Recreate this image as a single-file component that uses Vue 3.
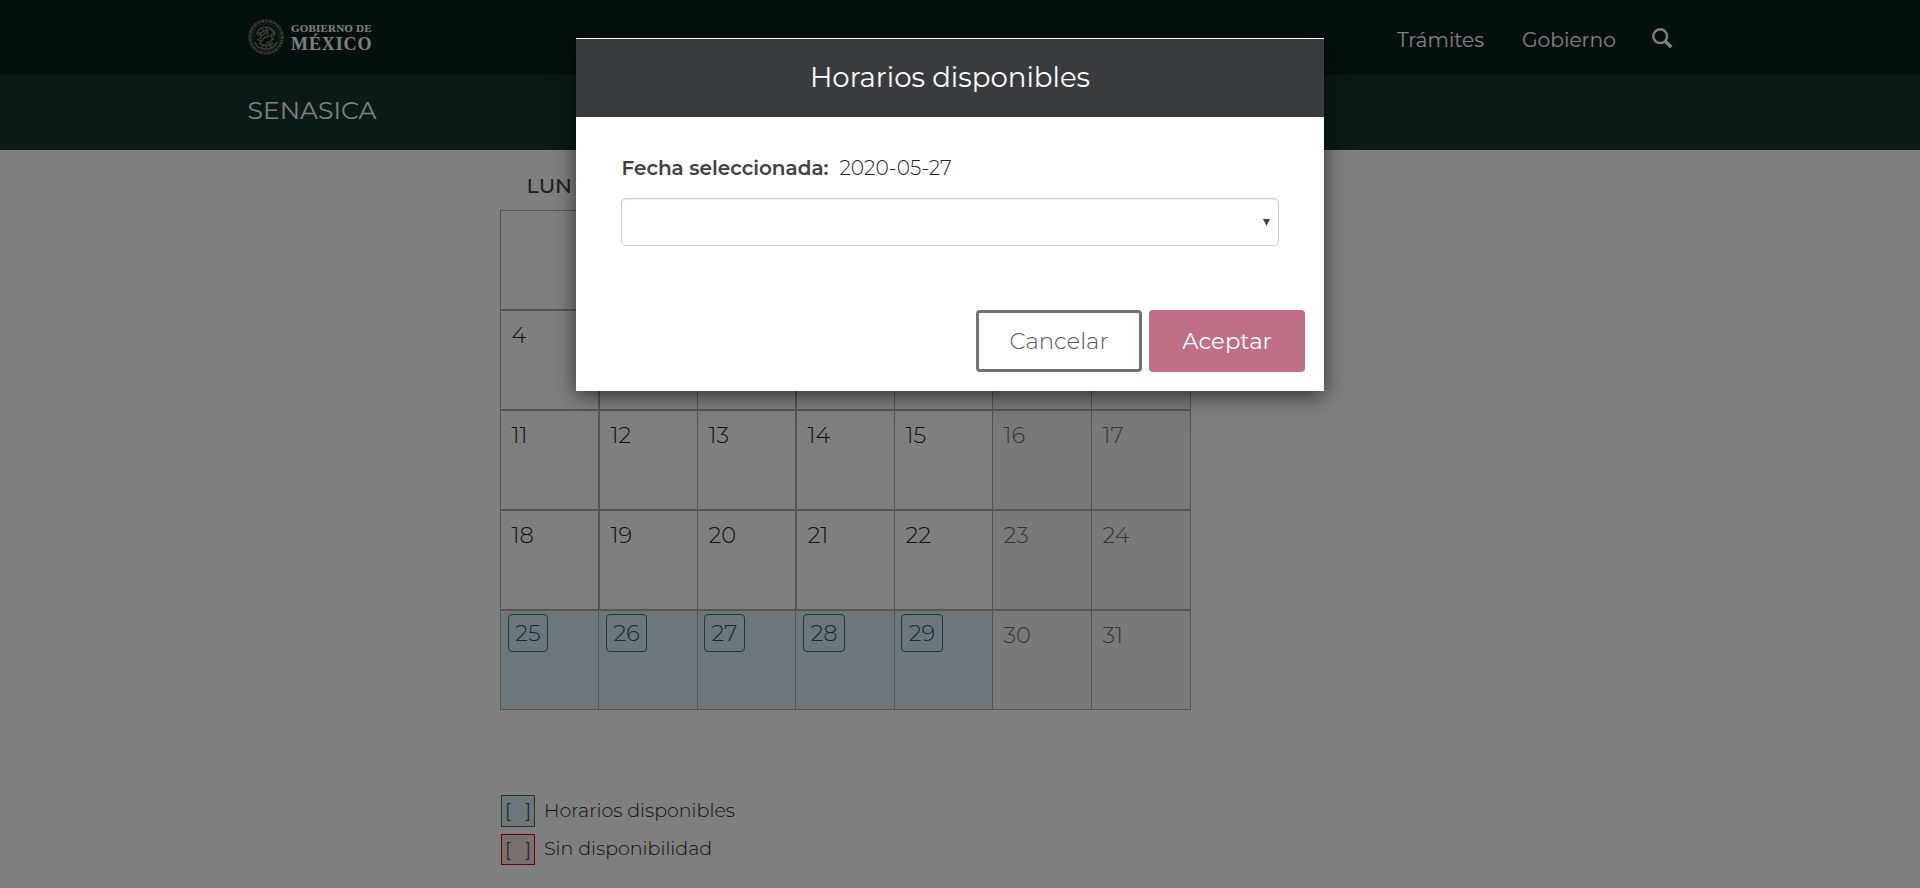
<script setup>
const days = [
  null, null, null, null, 1, 2, 3,
  ...Array.from({ length: 28 }, (_, i) => i + 4),
]
const cells = days.map((day, i) => {
  const col = i % 7
  const row = Math.floor(i / 7)
  return {
    day,
    weekend: col > 4,
    available: row === 4 && col < 5,
    thick: col === 1 || col === 3,
    top: row > 0,
    covered: row < 2 && day !== 4,
  }
})
const weekdays = ['LUN', 'MAR', 'MIÉ', 'JUE', 'VIE', 'SÁB', 'DOM']
</script>

<template>
  <div class="page">
    <header class="topbar">
      <div class="brand">
        <svg class="seal" viewBox="0 0 36 36" fill="none" stroke="#77725c">
          <circle cx="18" cy="18" r="16.2" stroke-width="3" stroke-dasharray="2.2 .7 1.2 .6 2.8 .8" />
          <circle cx="18" cy="18" r="13.4" stroke-width=".7" opacity=".7" />
          <g stroke-width="1.7">
            <path d="M9 16c0-5 4-8 9-8 4 0 8 3 9 7M11 17c2-5 6-6 9-5M12 20c2-5 5-6 9-6M14 22c2-4 5-5 8-5" />
            <path d="M21 10c3 1 5 3 5 6l-3-1M22 16c3 2 3 5 0 7l-4 1M10 13l4 4M14 10l3 4M18 9l2 4M24 18l2 3M9 20l5 3" />
            <path d="M7 23c2 5 6 7 11 7s9-3 11-7M11 24c4 3 10 3 14 0M15 25l-1 4M18 26v4M22 25l1 4" />
          </g>
        </svg>
        <div class="wordmark">
          <span class="w1">GOBIERNO DE</span>
          <span class="w2">MÉXICO</span>
        </div>
      </div>
      <nav class="nav">
        <a class="n1">Trámites</a>
        <a class="n2">Gobierno</a>
        <svg class="search" viewBox="0 0 21 21" fill="none" stroke="#fff">
          <circle cx="8.2" cy="8.2" r="6.9" stroke-width="2.4" />
          <path d="M13 13l6.3 6.3" stroke-width="3.6" />
        </svg>
      </nav>
    </header>
    <div class="subbar"><span>SENASICA</span></div>

    <main class="content">
      <div class="weekdays">
        <span v-for="(w, i) in weekdays" :key="w" :class="{ covered: i > 0 }">{{ w }}</span>
      </div>
      <div class="calendar">
        <div
          v-for="(c, i) in cells"
          :key="i"
          class="cell"
          :class="{ weekend: c.weekend, available: c.available, thick: c.thick, top: c.top }"
        >
          <span v-if="c.available" class="pill">{{ c.day }}</span>
          <span v-else class="num" :class="{ covered: c.covered }">{{ c.day }}</span>
        </div>
      </div>
      <div class="legend">
        <div class="item"><span class="box"><i>[</i><i>]</i></span><span>Horarios disponibles</span></div>
        <div class="item"><span class="box no"><i>[</i><i>]</i></span><span>Sin disponibilidad</span></div>
      </div>
    </main>

    <div class="backdrop">
      <section class="modal">
        <h4 class="title"><span>Horarios disponibles</span></h4>
        <div class="body">
          <p class="date"><b>Fecha seleccionada:</b><span>2020-05-27</span></p>
          <div class="select">
            <svg viewBox="0 0 7 7"><path d="M0 0h7L3.5 7z" fill="#444" /></svg>
          </div>
        </div>
        <footer class="actions">
          <button class="btn cancel"><span>Cancelar</span></button>
          <button class="btn accept"><span>Aceptar</span></button>
        </footer>
      </section>
    </div>
  </div>
</template>

<style>
body {
  margin: 0;
  overflow: hidden;
}
</style>

<style scoped>
.page {
  position: relative;
  box-sizing: border-box;
  height: 888px;
  overflow: hidden;
  background: #fff;
  color: #404041;
  font-family: Montserrat, Inter, "Open Sans", sans-serif;
  font-weight: 400;
}
.topbar {
  display: flex;
  justify-content: space-between;
  box-sizing: border-box;
  height: 75px;
  padding: 0 247px 0 248px;
  background: #0b231e;
  color: #fff;
}
.brand {
  display: flex;
  gap: 7px;
  padding-top: 19px;
}
.seal {
  width: 36px;
  height: 36px;
}
.wordmark {
  display: flex;
  flex-direction: column;
  font-family: "Liberation Serif", serif;
  font-weight: 700;
  white-space: nowrap;
}
.w1 {
  margin-top: 3px;
  font-size: 11px;
  line-height: 12px;
  letter-spacing: 0.2px;
}
.w2 {
  font-size: 18px;
  line-height: 20px;
  letter-spacing: 0.9px;
}
.nav {
  display: flex;
  padding-top: 28px;
  font-size: 20.2px;
  line-height: 24px;
}
.n1 {
  width: 125px;
}
.n2 {
  width: 130px;
}
.search {
  width: 21px;
  height: 21px;
}
.subbar {
  box-sizing: border-box;
  height: 75px;
  padding: 20px 0 0 247.5px;
  background: #15342d;
  color: #fff;
  font-size: 25.1px;
  line-height: 30px;
}
.content {
  width: 920px;
  margin-left: 500px;
}
.covered {
  visibility: hidden;
}
.weekdays {
  display: grid;
  grid-template-columns: repeat(7, 98.6px);
  box-sizing: border-box;
  width: 691px;
  height: 60px;
  padding-top: 24px;
  text-align: center;
  font-size: 20.8px;
  font-weight: 500;
  line-height: 24px;
  color: #404041;
}
.calendar {
  display: grid;
  grid-template-columns: 98px 99px 98px 99px 98px 99px 99px;
  grid-template-rows: 99px repeat(4, 100px);
  width: 690px;
  border-top: 1px solid #ababab;
  border-left: 1px solid #ababab;
}
.cell {
  box-sizing: border-box;
  border-right: 1px solid #ababab;
  border-bottom: 1px solid #ababab;
  color: #222;
  font-size: 22.6px;
  font-weight: 300;
  line-height: 28px;
}
.cell.top {
  border-top: 1px solid #ababab;
}
.cell.thick:not(.available) {
  border-left: 1px solid #ababab;
}
.cell.weekend {
  background: #f2f2f2;
  color: #6c6c6c;
}
.cell.available {
  background: #d9edf7;
  color: #1f5670;
}
.num {
  display: block;
  padding: 10px 0 0 10.5px;
}
.pill {
  display: flex;
  justify-content: center;
  box-sizing: border-box;
  width: 41px;
  height: 38px;
  margin: 3px 0 0 7px;
  padding-top: 4px;
  border: 1px solid #31708f;
  border-radius: 4px;
}
.cell:nth-child(7n + 1) .pill {
  width: 40px;
}
.cell:nth-child(7n + 3) .pill,
.cell:nth-child(7n + 5) .pill {
  margin-left: 6px;
}
.cell:nth-child(7n + 4) .pill,
.cell:nth-child(7n + 5) .pill {
  width: 42px;
}
.legend {
  display: grid;
  gap: 7px;
  padding: 85px 0 0 1px;
  color: #222;
  font-size: 19.05px;
  font-weight: 300;
  line-height: 31px;
}
.item {
  display: flex;
  gap: 9px;
}
.item:last-child {
  line-height: 29px;
}
.box {
  display: flex;
  justify-content: space-between;
  box-sizing: border-box;
  width: 34px;
  height: 32px;
  padding: 0 3px;
  border: 1px solid #3c763d;
  background: #d9edf7;
  line-height: 30px;
}
.box i {
  font-style: normal;
}
.box.no {
  height: 31px;
  border-color: #d0021b;
  background: #f2dede;
  line-height: 29px;
}
.backdrop {
  position: absolute;
  inset: 0;
  display: flex;
  justify-content: center;
  align-items: flex-start;
  box-sizing: border-box;
  padding: 38px 20px 0 0;
  background: rgba(0, 0, 0, 0.5);
}
.modal {
  box-sizing: border-box;
  width: 748px;
  height: 353px;
  padding-top: 1px;
  background: #fff;
  box-shadow: 0 5px 20px rgba(0, 0, 0, 0.6);
}
.title {
  height: 78px;
  margin: 0;
  background: #393c3e;
  color: #fff;
  font-size: 27.6px;
  font-weight: 400;
  line-height: 77px;
  text-align: center;
}
.body {
  padding: 38px 45px 0;
}
.date {
  display: flex;
  gap: 11px;
  height: 43px;
  margin: 0 0 0 0.5px;
  font-size: 20px;
  line-height: 26px;
}
.date b {
  font-weight: 600;
}
.date span {
  color: #222;
  font-size: 20.2px;
  font-weight: 300;
}
.select {
  display: flex;
  align-items: center;
  justify-content: flex-end;
  box-sizing: border-box;
  height: 48px;
  padding-right: 8px;
  border: 1px solid #ccc;
  border-radius: 5px;
  box-shadow: inset 0 1px 1px rgba(0, 0, 0, 0.075);
}
.select svg {
  width: 7px;
  height: 7px;
}
.actions {
  display: flex;
  justify-content: flex-end;
  gap: 7px;
  padding: 64px 19px 0 0;
}
.btn {
  box-sizing: border-box;
  height: 62px;
  padding: 0;
  border: 3px solid #6f7271;
  border-radius: 4px;
  background: #fff;
  font: inherit;
  font-size: 22.8px;
  line-height: 28px;
}
.cancel {
  width: 166px;
  color: #565958;
  font-weight: 300;
}
.accept {
  width: 156px;
  border-color: #c16e87;
  background: #c16e87;
  color: #fff;
}
</style>
